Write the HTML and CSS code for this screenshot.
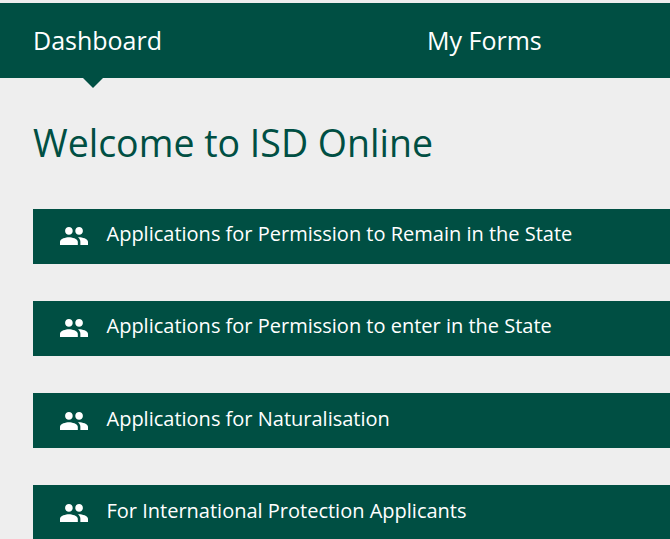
FILE: index.html
```html
<!DOCTYPE html>
<html lang="en">
<head>
<meta charset="utf-8">
<title>ISD Online</title>
<link rel="stylesheet" href="styles.css">
</head>
<body>
<nav class="nav">
  <a class="nav-item nav-active">Dashboard</a>
  <a class="nav-item">My Forms</a>
</nav>
<main class="main">
  <h1 class="title">Welcome to ISD Online</h1>
  <ul class="list">
    <li class="row"><svg class="icon" viewBox="1 5 22 14"><path d="M16 11c1.660 0 2.990-1.340 2.990-3S17.660 5 16 5c-1.660 0-3 1.340-3 3s1.340 3 3 3zm-8 0c1.660 0 2.990-1.340 2.990-3S9.660 5 8 5C6.340 5 5 6.340 5 8s1.340 3 3 3zm0 2c-2.330 0-7 1.170-7 3.500V19h14v-2.500c0-2.330-4.670-3.500-7-3.500zm8 0c-.29 0-.62.02-.97.05 1.160.84 1.970 1.970 1.970 3.450V19h6v-2.500c0-2.330-4.670-3.500-7-3.500z"/></svg><span>Applications for Permission to Remain in the State</span></li>
    <li class="row"><svg class="icon" viewBox="1 5 22 14"><path d="M16 11c1.660 0 2.990-1.340 2.990-3S17.660 5 16 5c-1.660 0-3 1.340-3 3s1.340 3 3 3zm-8 0c1.660 0 2.990-1.340 2.990-3S9.660 5 8 5C6.340 5 5 6.340 5 8s1.340 3 3 3zm0 2c-2.330 0-7 1.170-7 3.500V19h14v-2.500c0-2.330-4.670-3.500-7-3.500zm8 0c-.29 0-.62.02-.97.05 1.160.84 1.970 1.970 1.970 3.450V19h6v-2.500c0-2.330-4.670-3.500-7-3.500z"/></svg><span>Applications for Permission to enter in the State</span></li>
    <li class="row"><svg class="icon" viewBox="1 5 22 14"><path d="M16 11c1.660 0 2.990-1.340 2.990-3S17.660 5 16 5c-1.660 0-3 1.340-3 3s1.340 3 3 3zm-8 0c1.660 0 2.990-1.340 2.990-3S9.660 5 8 5C6.340 5 5 6.340 5 8s1.340 3 3 3zm0 2c-2.330 0-7 1.170-7 3.500V19h14v-2.500c0-2.330-4.670-3.500-7-3.500zm8 0c-.29 0-.62.02-.97.05 1.160.84 1.970 1.970 1.970 3.450V19h6v-2.500c0-2.330-4.670-3.500-7-3.500z"/></svg><span>Applications for Naturalisation</span></li>
    <li class="row"><svg class="icon" viewBox="1 5 22 14"><path d="M16 11c1.660 0 2.990-1.340 2.990-3S17.660 5 16 5c-1.660 0-3 1.340-3 3s1.340 3 3 3zm-8 0c1.660 0 2.990-1.340 2.990-3S9.660 5 8 5C6.340 5 5 6.340 5 8s1.340 3 3 3zm0 2c-2.330 0-7 1.170-7 3.500V19h14v-2.500c0-2.330-4.670-3.500-7-3.500zm8 0c-.29 0-.62.02-.97.05 1.160.84 1.970 1.970 1.970 3.450V19h6v-2.500c0-2.330-4.670-3.500-7-3.500z"/></svg><span>For International Protection Applicants</span></li>
  </ul>
</main>
</body>
</html>
```
FILE: styles.css
```css
html, body {
  margin: 0;
  padding: 0;
  overflow: hidden;
  background: #eeeeee;
  font-family: "Open Sans", sans-serif;
}
body {
  padding-top: 3px;
  height: 536px;
}
.nav {
  height: 75px;
  background: #004f43;
  display: flex;
  align-items: center;
  gap: 265px;
  padding-left: 33px;
  color: #fff;
}
.nav-item {
  position: relative;
  font-size: 25px;
  line-height: 33px;
  flex: none;
}
.nav-active::after {
  content: "";
  position: absolute;
  left: 50px;
  top: 54px;
  border-left: 10.500px solid transparent;
  border-right: 10.500px solid transparent;
  border-top: 10px solid #004f43;
}
.main {
  padding-left: 33px;
}
.title {
  margin: 0;
  padding-top: 40px;
  font-size: 37.500px;
  line-height: 49px;
  font-weight: 400;
  color: #004f43;
}
.list {
  list-style: none;
  margin: 0;
  padding: 41.600px 0 0;
  display: flex;
  flex-direction: column;
  gap: 37.200px;
}
.row {
  height: 55px;
  background: #004f43;
  color: #fff;
  display: flex;
  align-items: center;
  padding-left: 27px;
  padding-bottom: 4.800px;
  font-size: 20px;
  line-height: 27px;
  box-sizing: border-box;
}
.icon {
  width: 28px;
  height: 18px;
  fill: #fff;
  margin-right: 18.500px;
  flex: none;
  position: relative;
  top: 2.500px;
}
```
